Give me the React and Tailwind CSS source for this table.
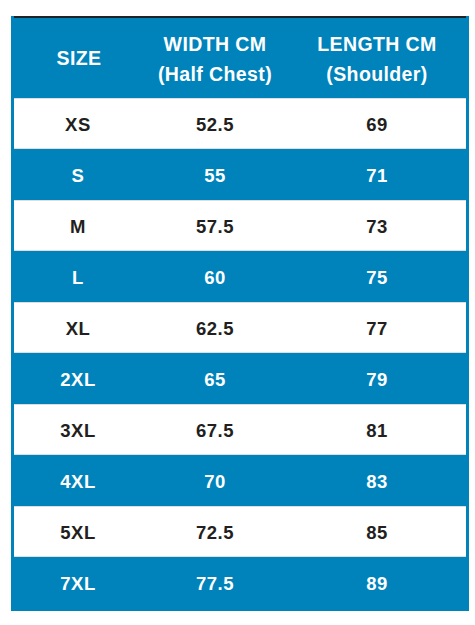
import React from "react";

const rows = [
  ["XS", "52.5", "69"],
  ["S", "55", "71"],
  ["M", "57.5", "73"],
  ["L", "60", "75"],
  ["XL", "62.5", "77"],
  ["2XL", "65", "79"],
  ["3XL", "67.5", "81"],
  ["4XL", "70", "83"],
  ["5XL", "72.5", "85"],
  ["7XL", "77.5", "89"],
];

const App = () => {
  return (
    <div
      className="min-h-[625px] bg-white pt-4 pl-[11px]"
      style={{ fontFamily: '"Liberation Sans", Arial, sans-serif' }}
    >
      <div className="w-[458px] bg-[#0083bb] px-[3px] pb-[3px]">
        {/* Header */}
        <div className="grid grid-cols-[128px_146px_178px] h-[82px] border-t-2 border-[#1e2326] items-center text-white font-bold text-[19.5px] tracking-[0.02em] text-center leading-[30px]">
          <div className="pl-[2px]">SIZE</div>
          <div className="pt-[1px]">
            <p>WIDTH CM</p>
            <p>(Half Chest)</p>
          </div>
          <div className="pt-[1px]">
            <p>LENGTH CM</p>
            <p>(Shoulder)</p>
          </div>
        </div>
        {/* Rows */}
        {rows.map((row, index) => (
          <div
            key={index}
            className={`grid grid-cols-[128px_146px_178px] h-[51px] items-center text-center font-bold text-[18.5px] tracking-[0.03em] pt-[3px] ${
              index % 2 === 0
                ? "bg-white text-[#231f20] border-y border-[#dedede]"
                : "text-white"
            }`}
          >
            <div>{row[0]}</div>
            <div>{row[1]}</div>
            <div>{row[2]}</div>
          </div>
        ))}
      </div>
    </div>
  );
};

export default App;
